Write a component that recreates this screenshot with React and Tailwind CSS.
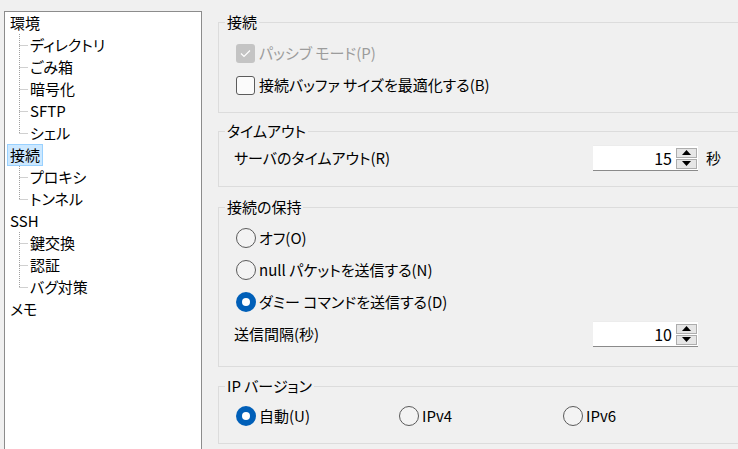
import React from "react";

const treeItems = [
  { label: "環境", level: 0 },
  { label: "ディレクトリ", level: 1 },
  { label: "ごみ箱", level: 1 },
  { label: "暗号化", level: 1 },
  { label: "SFTP", level: 1 },
  { label: "シェル", level: 1, last: true },
  { label: "接続", level: 0, selected: true },
  { label: "プロキシ", level: 1 },
  { label: "トンネル", level: 1, last: true },
  { label: "SSH", level: 0 },
  { label: "鍵交換", level: 1 },
  { label: "認証", level: 1 },
  { label: "バグ対策", level: 1, last: true },
  { label: "メモ", level: 0 },
];

function TreeRow({ item }) {
  if (item.level === 0) {
    return (
      <div className="flex h-[22px] items-center">
        <span
          className={`ml-[2px] px-[2px] leading-[20px] border ${
            item.selected ? "bg-[#cce8ff] border-[#99d1ff]" : "border-transparent"
          }`}
        >
          {item.label}
        </span>
      </div>
    );
  }
  return (
    <div className="flex h-[22px] items-center">
      <svg width="25" height="22" className="shrink-0">
        <line
          x1="14.5"
          y1="0"
          x2="14.5"
          y2={item.last ? 11 : 22}
          stroke="#a0a0a0"
          strokeDasharray="1 1"
        />
        <line x1="14.5" y1="11.5" x2="23" y2="11.5" stroke="#a0a0a0" strokeDasharray="1 1" />
      </svg>
      <span className="leading-[22px]">{item.label}</span>
    </div>
  );
}

function Checkbox({ checked, disabled, label }) {
  return (
    <div className="flex h-[32px] items-center">
      <span
        className={`w-[19px] h-[19px] rounded-[3px] flex items-center justify-center ${
          disabled ? "bg-[#c4c4c4]" : "bg-[#fbfbfb] border border-[#5c5c5c]"
        }`}
      >
        {checked && (
          <svg width="11" height="9" viewBox="0 0 11 9">
            <path d="M1 4.5 L4 7.5 L10 1.5" fill="none" stroke="#fff" strokeWidth="1.2" />
          </svg>
        )}
      </span>
      <span className={`ml-[4px] leading-[22px] ${disabled ? "text-[#9c9c9c]" : "text-black"}`}>
        {label}
      </span>
    </div>
  );
}

function Radio({ checked, label, className = "" }) {
  return (
    <div className={`flex h-[32px] items-center ${className}`}>
      {checked ? (
        <span className="w-[20px] h-[20px] rounded-full bg-[#005fb8] flex items-center justify-center">
          <span className="w-[8px] h-[8px] rounded-full bg-white" />
        </span>
      ) : (
        <span className="w-[20px] h-[20px] rounded-full border border-[#5a5a5a] bg-[#f3f3f3]" />
      )}
      <span className="ml-[3px] leading-[22px]">{label}</span>
    </div>
  );
}

function Spinner({ value }) {
  return (
    <div className="w-[105px] h-[26px] bg-white border-t border-[#ececec] border-b border-b-[#8a8a8a] flex items-center justify-end pr-[1px]">
      <span className="leading-[22px] text-[16px]">{value}</span>
      <div className="ml-[4px] flex flex-col gap-[1px]">
        <div className="w-[21px] h-[10px] border border-[#adadad] bg-[#e6e6e6] flex items-center justify-center">
          <svg width="9" height="5" viewBox="0 0 9 5">
            <path d="M0 5 L4.5 0 L9 5 Z" fill="#000" />
          </svg>
        </div>
        <div className="w-[21px] h-[10px] border border-[#adadad] bg-[#e6e6e6] flex items-center justify-center">
          <svg width="9" height="5" viewBox="0 0 9 5">
            <path d="M0 0 L4.5 5 L9 0 Z" fill="#000" />
          </svg>
        </div>
      </div>
    </div>
  );
}

function Group({ title, className, children }) {
  return (
    <fieldset className={`w-[560px] border border-[#dcdcdc] ${className}`}>
      <legend className="ml-[6px] px-[2px] leading-[22px]">{title}</legend>
      {children}
    </fieldset>
  );
}

export default function App() {
  return (
    <div className="w-[738px] h-[449px] bg-[#f0f0f0] flex overflow-hidden text-[15px] text-black font-['Noto_Sans_CJK_JP',sans-serif] [font-feature-settings:'palt']">
      {/* tree */}
      <div className="ml-[4px] mt-[11px] w-[198px] h-[460px] shrink-0 bg-white border border-[#8c8c8c]">
        {treeItems.map((item, i) => (
          <TreeRow key={i} item={item} />
        ))}
      </div>

      {/* settings */}
      <div className="ml-[16px] pt-[11px] flex flex-col shrink-0">
        <Group title="接続" className="h-[102px]">
          <div className="pl-[17px] mt-[4px]">
            <Checkbox checked disabled label="パッシブ モード(P)" />
            <Checkbox label="接続バッファ サイズを最適化する(B)" />
          </div>
        </Group>

        <Group title="タイムアウト" className="h-[67px] mt-[7px]">
          <div className="flex items-center h-[32px] pl-[15px]">
            <span className="w-[359px] leading-[22px]">サーバのタイムアウト(R)</span>
            <Spinner value="15" />
            <span className="ml-[8px] leading-[22px]">秒</span>
          </div>
        </Group>

        <Group title="接続の保持" className="h-[171px] mt-[9px]">
          <div className="pl-[17px] mt-[4px]">
            <Radio label="オフ(O)" />
            <Radio label="null パケットを送信する(N)" />
            <Radio checked label="ダミー コマンドを送信する(D)" />
          </div>
          <div className="flex items-center h-[32px] pl-[15px]">
            <span className="w-[359px] leading-[22px]">送信間隔(秒)</span>
            <Spinner value="10" />
          </div>
        </Group>

        <Group title="IP バージョン" className="h-[69px] mt-[8px]">
          <div className="flex pl-[17px] mt-[3px]">
            <Radio checked label="自動(U)" className="w-[163px]" />
            <Radio label="IPv4" className="w-[164px]" />
            <Radio label="IPv6" />
          </div>
        </Group>
      </div>
    </div>
  );
}
